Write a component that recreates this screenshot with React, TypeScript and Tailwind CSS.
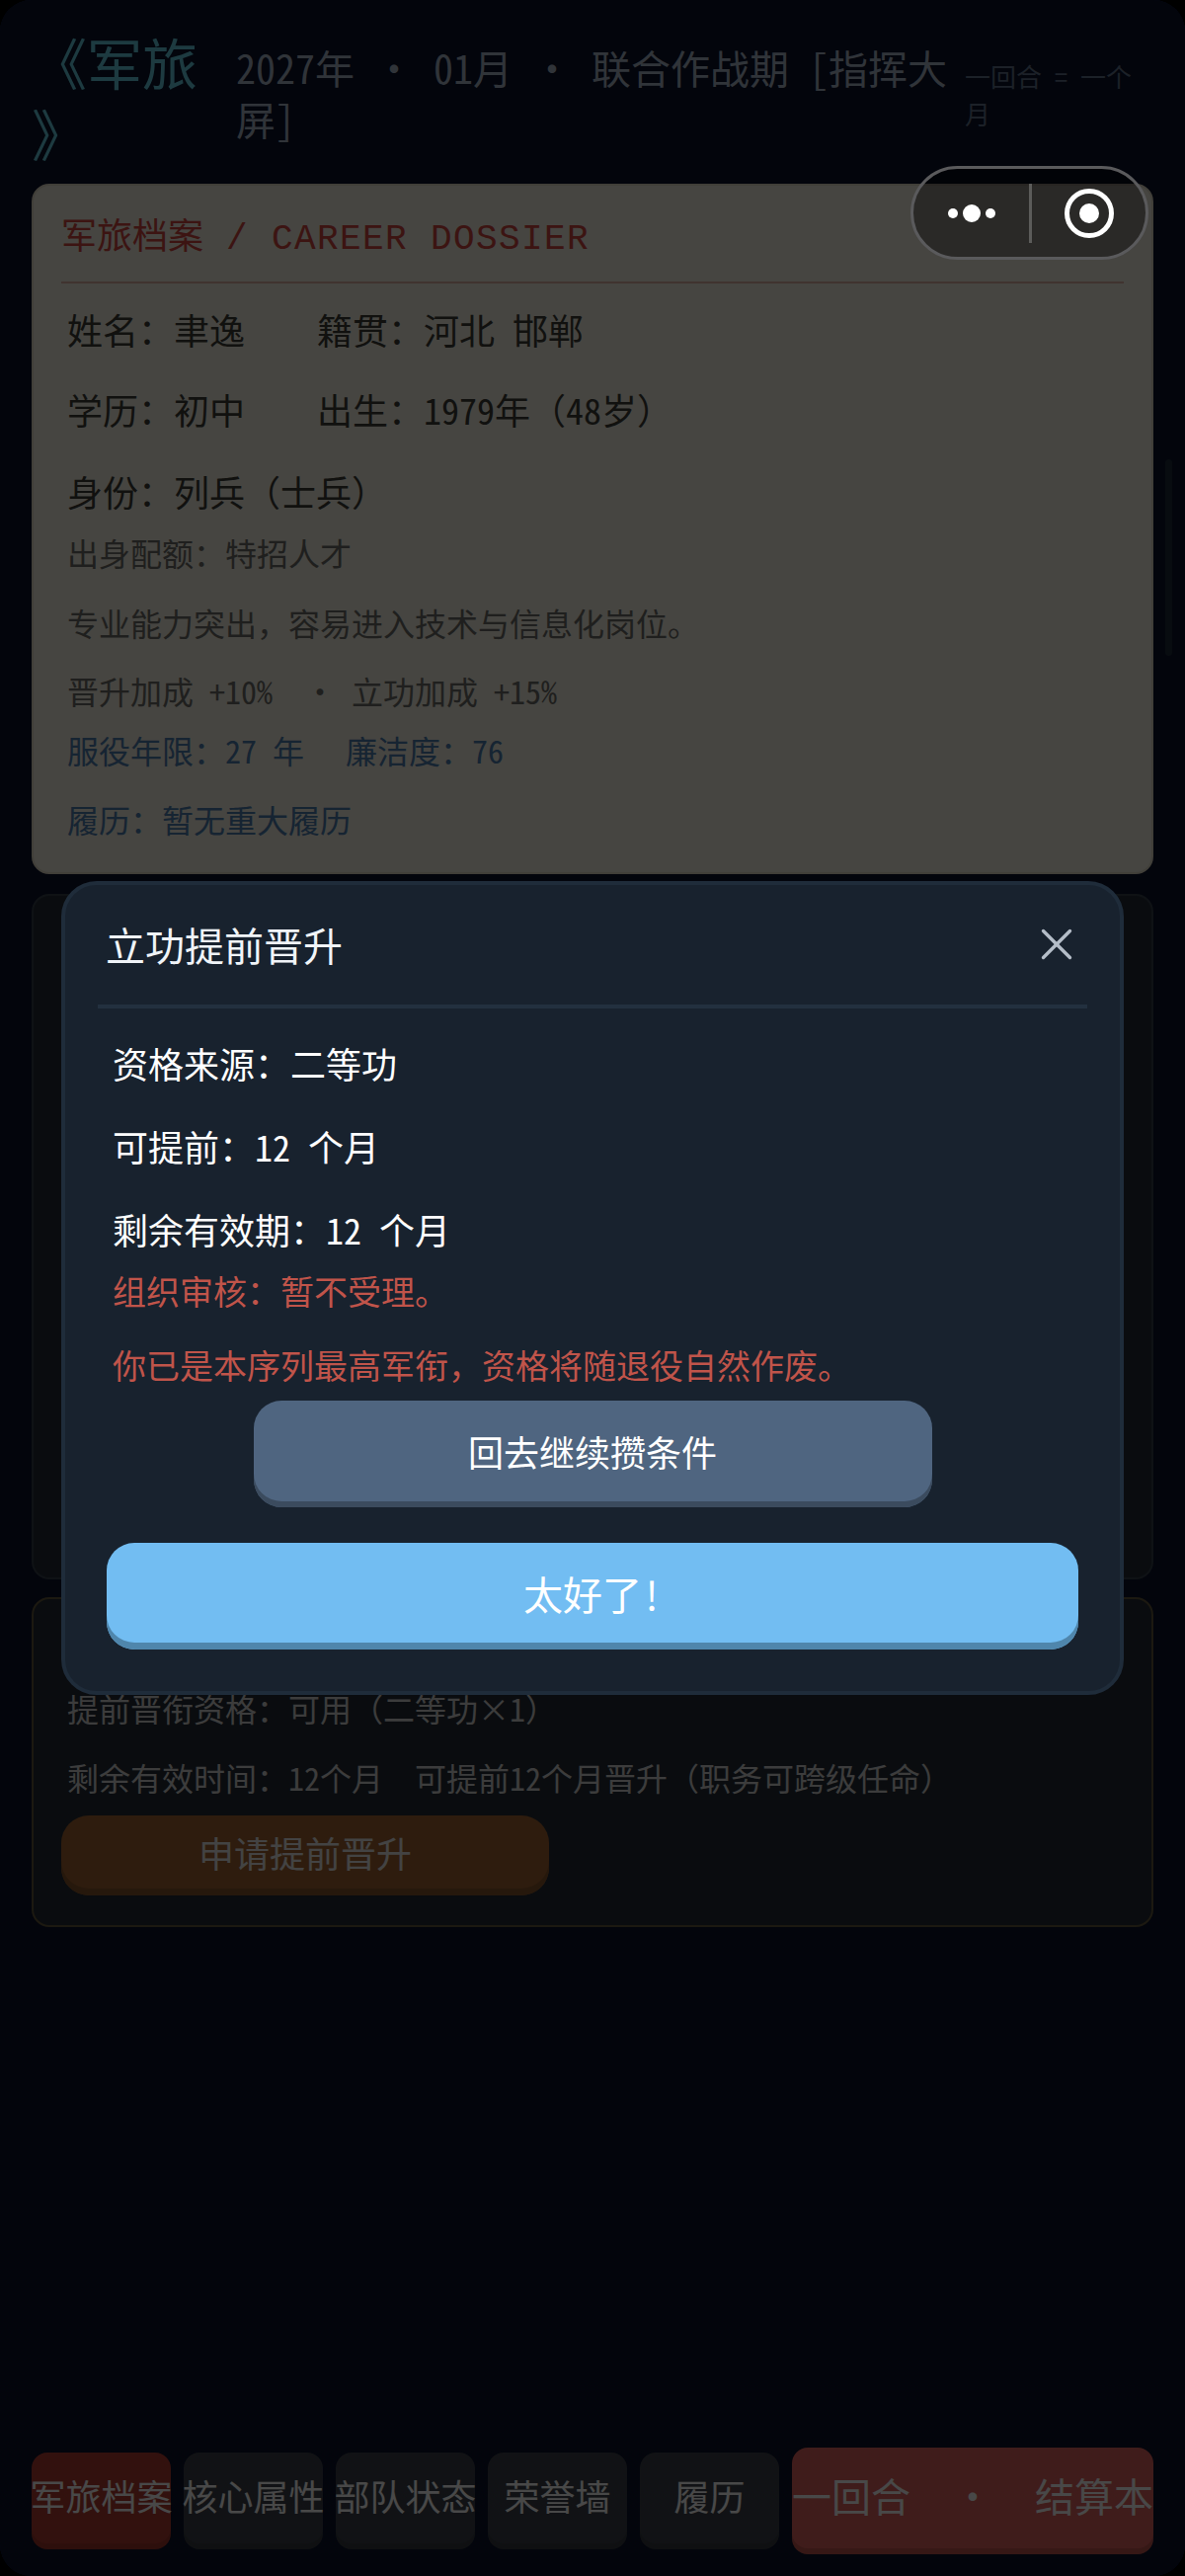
import { X } from "lucide-react";

function Capsule() {
  return (
    <div className="absolute left-[922px] top-[168px] flex h-[95px] w-[241px] items-center rounded-full border-[3px] border-[#5a5a5c] bg-black/40">
      <div className="flex w-[117px] items-center justify-center gap-[5px]">
        <span className="size-[10px] rounded-full bg-white" />
        <span className="size-[18px] rounded-full bg-white" />
        <span className="size-[10px] rounded-full bg-white" />
      </div>
      <div className="h-[60px] w-[3px] bg-[#5c5c5a]" />
      <div className="flex flex-1 items-center justify-center">
        <svg width="50" height="50" viewBox="0 0 50 50">
          <circle cx="25" cy="25" r="22.5" fill="none" stroke="#fff" strokeWidth="5" />
          <circle cx="25" cy="25" r="10" fill="#fff" />
        </svg>
      </div>
    </div>
  );
}

function Modal() {
  return (
    <div className="flex h-[824px] w-[1076px] flex-col rounded-[36px] border-4 border-[#1f2c3a] bg-[#18222e] px-[33px]">
      <div className="flex h-[125px] shrink-0 items-center justify-between border-b-4 border-[#22303f] pr-[4px] pb-[2px] pl-[8px]">
        <h2 className="text-[40px] leading-[52px] text-[#f0f4f8]">立功提前晋升</h2>
        <X className="size-[54px] text-[#b4bdc8]" strokeWidth={1.5} />
      </div>
      <div className="px-[15px] pt-[31px] text-[36px] leading-[48px] text-white">
        <p className="mb-[36px]">{"资格来源\uFF1A二等功"}</p>
        <p className="mb-[36px]">{"可提前\uFF1A12 个月"}</p>
        <p>{"剩余有效期\uFF1A12 个月"}</p>
      </div>
      <div className="mt-[17px] px-[15px] text-[34px] leading-[44px] text-[#c0544a]">
        <p className="mb-[31px]">{"组织审核\uFF1A暂不受理。"}</p>
        <p>{"你已是本序列最高军衔\uFF0C资格将随退役自然作废。"}</p>
      </div>
      <div className="mt-[14px] flex flex-col items-center gap-[36px]">
        <button className="h-[108px] w-[687px] rounded-[28px] bg-[#4f6580] pb-[6px] text-[36px] text-white shadow-[inset_0_-6px_0_#3b4b5e]">
          回去继续攒条件
        </button>
        <button className="h-[108px] w-[984px] rounded-[28px] bg-[#72bdf2] pb-[7px] text-[40px] text-white shadow-[inset_0_-7px_0_#4f86ac]">
          太好了!
        </button>
      </div>
    </div>
  );
}

const tabs = ["军旅档案", "核心属性", "部队状态", "荣誉墙", "履历"];

export default function App() {
  return (
    <div className="h-[2608px] w-[1200px] bg-black">
      <div className="relative h-full overflow-hidden rounded-[32px] bg-[#0a1128] font-['Noto_Sans_Mono_CJK_SC','Liberation_Mono','Noto_Sans_CJK_SC',monospace]">
        <div className="flex h-full flex-col px-[32px]">
          <header className="flex h-[154px] shrink-0 items-start pt-[26px]">
            <h1 className="w-[175px] shrink-0 text-[56px] leading-[72px] text-[#61c2d5]">
              《军旅
              <br />》
            </h1>
            <p className="w-[770px] shrink-0 pl-[32px] pt-[16px] text-[40px] leading-[52px] whitespace-pre-wrap text-[#a0adc0]">
              2027年 · 01月 · 联合作战期 [指挥大屏]
            </p>
            <p className="flex-1 pt-[32px] text-[26px] leading-[38px] text-[#5e6e85]">一回合 = 一个月</p>
          </header>

          <section className="mt-[32px] h-[699px] shrink-0 rounded-[18px] border-2 border-[#d9d2c0] bg-[#e9e6d9] px-[28px]">
            <div className="flex h-[99px] items-center border-b-2 border-[#d6ab9f] pt-[6px]">
              <h3 className="text-[36px] whitespace-pre text-[#c8443c]">
                军旅档案
                <span className="font-['Liberation_Mono',monospace] tracking-[1.4px]"> / CAREER DOSSIER</span>
              </h3>
            </div>
            <div className="px-[6px] pt-[22px] text-[36px] leading-[48px] text-[#3a3a35]">
              <div className="flex gap-[73px]">
                <p className="w-[180px] whitespace-nowrap">{"姓名\uFF1A聿逸"}</p>
                <p>{"籍贯\uFF1A河北 邯郸"}</p>
              </div>
              <div className="mt-[33px] flex gap-[73px]">
                <p className="w-[180px] whitespace-nowrap">{"学历\uFF1A初中"}</p>
                <p>{"出生\uFF1A1979年\uFF0848岁\uFF09"}</p>
              </div>
              <p className="mt-[35px]">{"身份\uFF1A列兵\uFF08士兵\uFF09"}</p>
            </div>
            <div className="px-[6px] text-[32px] leading-[42px]">
              <p className="mt-[17px] text-[#6a6a64]">{"出身配额\uFF1A特招人才"}</p>
              <p className="mt-[29px] text-[#6a6a64]">{"专业能力突出\uFF0C容易进入技术与信息化岗位。"}</p>
              <p className="mt-[27px] whitespace-pre text-[#6a6a64]">晋升加成 +10%  · 立功加成 +15%</p>
              <p className="mt-[18px] whitespace-pre text-[#4a78a8]">
                {"服役年限\uFF1A27 年"}
                <span className="ml-[42px]">{"廉洁度\uFF1A76"}</span>
              </p>
              <p className="mt-[28px] text-[#4a78a8]">{"履历\uFF1A暂无重大履历"}</p>
            </div>
          </section>

          <section className="mt-[20px] h-[694px] shrink-0 rounded-[18px] border-2 border-[#333d48] bg-[#222b35]" />

          <section className="mt-[18px] h-[334px] shrink-0 rounded-[18px] border-2 border-[#5f5539] bg-[#222b35] px-[28px] pt-[89px]">
            <div className="text-[32px] leading-[42px] text-[#c8c8c8]">
              <p className="px-[6px]">{"提前晋衔资格\uFF1A可用\uFF08二等功×1\uFF09"}</p>
              <p className="mt-[28px] whitespace-pre px-[6px]">{"剩余有效时间\uFF1A12个月  可提前12个月晋升\uFF08职务可跨级任命\uFF09"}</p>
            </div>
            <button className="mt-[18px] h-[81px] w-[494px] rounded-[28px] bg-[#995f30] pb-[7px] text-[36px] text-[#e0e0e0] shadow-[inset_0_-7px_0_#805028]">
              申请提前晋升
            </button>
          </section>

          <nav className="mt-auto mb-[22px] flex shrink-0 items-center gap-[13px]">
            {tabs.map((tab, i) => (
              <div
                key={tab}
                className={`flex h-[98px] w-[141px] shrink-0 items-center justify-center rounded-[16px] pb-[12px] text-[36px] whitespace-nowrap text-[#f0f0f0] shadow-[inset_0_-6px_0_rgba(0,0,0,0.1)] ${
                  i === 0 ? "bg-[#a83a30]" : "bg-[#3a3f47]"
                }`}
              >
                {tab}
              </div>
            ))}
            <div className="flex h-[108px] flex-1 items-center justify-between rounded-[16px] bg-[#d45f5a] pb-[12px] text-[40px] whitespace-nowrap text-[#f0f0f0] shadow-[inset_0_-6px_0_rgba(0,0,0,0.15)]">
              <span>一回合</span>
              <span>·</span>
              <span>结算本</span>
            </div>
          </nav>
        </div>

        {/* faint page scrollbar */}
        <div className="absolute top-[465px] left-[1180px] h-[199px] w-[7px] rounded-full bg-[#1c2a38]" />

        <div className="absolute inset-0 flex items-center justify-center bg-black/70">
          <Modal />
        </div>
        <Capsule />
      </div>
    </div>
  );
}
